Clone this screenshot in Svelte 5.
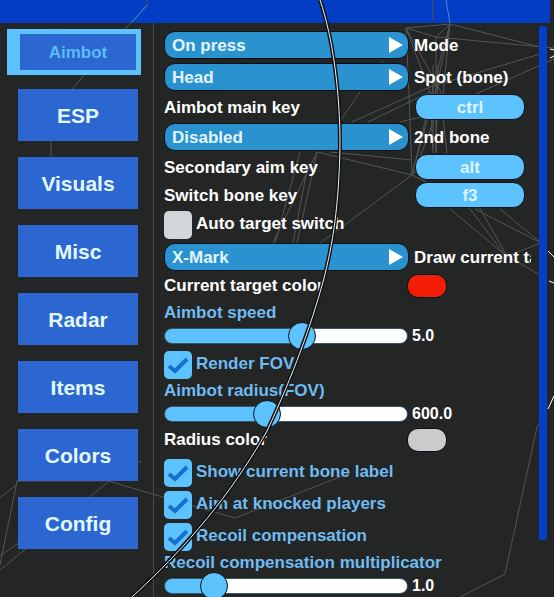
<script>
	/* Data */
	const tabs = ['Aimbot', 'ESP', 'Visuals', 'Misc', 'Radar', 'Items', 'Colors', 'Config']
	let active = 'Aimbot'

	let rows = [
		{ kind: 'select', id: 'mode', label: 'Mode', value: 'On press', options: ['On press', 'On hold'] },
		{ kind: 'select', id: 'spot', label: 'Spot (bone)', value: 'Head', options: ['Head', 'Neck', 'Chest'] },
		{ kind: 'key', id: 'main-key', label: 'Aimbot main key', value: 'ctrl' },
		{ kind: 'select', id: 'second', label: '2nd bone', value: 'Disabled', options: ['Disabled', 'Head', 'Chest'] },
		{ kind: 'key', id: 'second-key', label: 'Secondary aim key', value: 'alt' },
		{ kind: 'key', id: 'switch-key', label: 'Switch bone key', value: 'f3' },
		{ kind: 'check', id: 'auto-switch', label: 'Auto target switch', value: false },
		{ kind: 'select', id: 'draw', label: 'Draw current ta', value: 'X-Mark', options: ['X-Mark', 'Circle'] },
		{ kind: 'color', id: 'target-color', label: 'Current target color', value: '#f31c05' },
		{ kind: 'slider', id: 'speed', label: 'Aimbot speed', value: 5, max: 8.7 },
		{ kind: 'check', id: 'fov', label: 'Render FOV', value: true },
		{ kind: 'slider', id: 'radius', label: 'Aimbot radius(FOV)', value: 600, max: 1460 },
		{ kind: 'color', id: 'radius-color', label: 'Radius color', value: '#cbcbcb' },
		{ kind: 'check', id: 'bone-label', label: 'Show current bone label', value: true },
		{ kind: 'check', id: 'knocked', label: 'Aim at knocked players', value: true },
		{ kind: 'check', id: 'recoil', label: 'Recoil compensation', value: true },
		{ kind: 'slider', id: 'recoil-mult', label: 'Recoil compensation multiplicator', value: 1, max: 6.1 }
	]
</script>

<main>
	<header></header>

	<svg class="web" viewBox="0 0 554 597" preserveAspectRatio="xMinYMin slice" aria-hidden="true">
		<path d="M147 0V6L126 28L72 89M51 141V157M0 498L17 484M0 565L17 481H108L235 518L350 473M0 556L20 542M0 570L108 482M134 464L142 461" />
		<path d="M406 28L450 24L436 37ZM436 37L554 48M450 24L540 47M433 0V20M540 54L430 87L352 122M554 59L476 94M430 92L368 122" />
		<path d="M406 28L409 95L412 175M406 28L430 92L433 150M406 28L440 90L447 153M450 24L437 85L412 175M450 24L443 95L414 174M450 24L440 60L412 175M436 37V153M433 65V153M438 65L436 153M360 92L341 120M383 61L381 64" />
		<path d="M317 152L412 175L320 243M330 152L412 160M317 152L273 243M300 152L275 243M306 175L293 243M317 152L297 243M400 122L440 112M412 175L430 184" />
		<path d="M450 209L505 255M478 205L507 256M467 205L505 255M475 209L541 243M500 209L541 243L507 256L540 275M537 427L505 574L460 597M547 409L537 427" />
		<path class="bright" d="M550 49L554 50M550 58L554 56M548 251L554 257M549 281L554 283M548 409L554 396" />
		<path class="cyan" d="M147 5L132 22M446 0L450 23" />
	</svg>

	<div class="body">
		<nav>
			{#each tabs as tab}
				<button class="tab" class:active={tab === active} on:click={() => (active = tab)}>{tab}</button>
			{/each}
		</nav>

		<section>
			{#each rows as row}
				<div class="row {row.kind}">
					{#if row.kind === 'select'}
						<div class="picker">
							<select id={row.id} bind:value={row.value}>
								{#each row.options as option}
									<option value={option}>{option}</option>
								{/each}
							</select>
							<svg viewBox="0 0 16 18" aria-hidden="true"><path d="M1 1L15 9L1 17Z" fill="#fff" /></svg>
						</div>
						<label for={row.id}>{row.label}</label>
					{:else if row.kind === 'key'}
						<label for={row.id}>{row.label}</label>
						<button id={row.id} class="bind">{row.value}</button>
					{:else if row.kind === 'check'}
						<span class="box">
							<input id={row.id} type="checkbox" bind:checked={row.value} />
							{#if row.value}
								<svg viewBox="0 0 28 28" aria-hidden="true"><path d="M5 15L11 20L23 8" /></svg>
							{/if}
						</span>
						<label for={row.id} class:on={row.value}>{row.label}</label>
					{:else if row.kind === 'color'}
						<label for={row.id}>{row.label}</label>
						<input id={row.id} type="color" bind:value={row.value} />
					{:else}
						<label class="on" for={row.id}>{row.label}</label>
						<div class="track">
							<input
								id={row.id}
								type="range"
								min="0"
								max={row.max}
								step="0.1"
								bind:value={row.value}
								style="--fill: {(row.value / row.max) * 100}%"
							/>
							<output for={row.id}>{row.value.toFixed(1)}</output>
						</div>
					{/if}
				</div>
			{/each}
		</section>

		<div class="scroll"><div class="thumb"></div></div>
	</div>

	<svg class="fov" viewBox="0 0 554 597" preserveAspectRatio="xMinYMin slice" aria-hidden="true">
		<path class="shade" d="M320 0C333 38 340 92 340 145C339 205 333 244 323 282C311 325 294 373 267 431C240 478 203 532 132 597" />
		<path d="M320 0C333 38 340 92 340 145C339 205 333 244 323 282C311 325 294 373 267 431C240 478 203 532 132 597" />
	</svg>
</main>

<style>
	:global(body) {
		background-color: #242525;
	}

	main {
		position: relative;
		display: flex;
		flex-direction: column;
		min-height: 100vh;
		overflow: hidden;
		font: bold 17px/22px "Liberation Sans", Arial, sans-serif;
		color: #fff;
		background-color: #242525;
	}

	header {
		height: 23px;
		margin-right: 4px;
		background-color: #033dc3;
	}

	.web,
	.fov {
		position: absolute;
		inset: 0;
		width: 100%;
		height: 100%;
		fill: none;
		pointer-events: none;
	}

	.web {
		stroke: #555;
	}

	.web .bright {
		stroke: #fff;
	}

	.web .cyan {
		stroke: #3a8fdd;
	}

	.fov {
		stroke: #eef3f6;
	}

	.fov .shade {
		stroke: #101418;
		stroke-width: 4;
	}

	.body {
		position: relative;
		flex: 1;
		display: flex;
	}

	nav {
		flex: none;
		box-sizing: border-box;
		width: 154px;
		padding: 6px 12px 0 7px;
		display: flex;
		flex-direction: column;
		gap: 16px;
		border-right: 1px solid #4a4a4a;
	}

	button {
		font: inherit;
		padding: 2px 0 0;
		border: 0;
		cursor: pointer;
	}

	.tab {
		height: 52px;
		margin: 0 3px 0 11px;
		font-size: 21px;
		color: #e2f9ff;
		background-color: #2c66d1;
	}

	.tab.active {
		height: 46px;
		margin: 0 0 -2px;
		border: solid #5dc3ff;
		border-width: 5px 5px 5px 13px;
		font-size: 17px;
		color: #5dbcf7;
	}

	section {
		flex: 1;
		min-width: 0;
		margin-right: 8px;
		padding: 8px 0 0 10px;
		overflow: hidden;
	}

	.row {
		display: flex;
		align-items: center;
		margin-bottom: 4px;
		white-space: nowrap;
	}

	.on {
		color: #6fbcf2;
	}

	.picker {
		position: relative;
		flex: none;
		width: 245px;
		margin-right: 5px;
	}

	select {
		display: block;
		appearance: none;
		box-sizing: border-box;
		width: 100%;
		height: 28px;
		padding: 2px 28px 0 7px;
		border: 1px solid #07131c;
		border-radius: 11px;
		font: inherit;
		color: #e4f5ff;
		background-color: #2992cf;
	}

	.picker svg {
		position: absolute;
		top: 5px;
		right: 5px;
		width: 16px;
		height: 18px;
		pointer-events: none;
	}

	.select label,
	.key label {
		padding-top: 2px;
	}

	.key label,
	.color label {
		flex: none;
		width: 243px;
	}

	.bind {
		box-sizing: border-box;
		width: 110px;
		height: 26px;
		margin: -1px 0 -1px 8px;
		border: 1px solid #07131c;
		border-radius: 12px;
		color: #dcf4ff;
		background-color: #5dc3ff;
	}

	.box {
		position: relative;
		display: flex;
		margin-right: 4px;
	}

	.box input {
		appearance: none;
		width: 28px;
		height: 28px;
		margin: 0;
		border-radius: 5px;
		background-color: #d2d5da;
	}

	.box input:checked {
		background-color: #5dc3ff;
	}

	.check label {
		padding-bottom: 2px;
	}

	.box svg {
		position: absolute;
		inset: 0;
		fill: none;
		stroke: #176fd0;
		stroke-width: 4;
		pointer-events: none;
	}

	.color + .check {
		margin-top: 8px;
	}

	.color input {
		appearance: none;
		box-sizing: border-box;
		width: 40px;
		height: 24px;
		margin: -1px 0;
		padding: 0;
		border: 1px solid #07131c;
		border-radius: 11px;
		overflow: hidden;
		background: none;
	}

	.color input::-webkit-color-swatch-wrapper {
		padding: 0;
	}

	.color input::-webkit-color-swatch {
		border: 0;
	}

	.slider {
		flex-direction: column;
		align-items: flex-start;
	}

	.slider label {
		line-height: 24px;
	}

	.check + .slider {
		margin-top: -4px;
	}

	.slider:last-child {
		margin-bottom: 0;
	}

	.track {
		display: flex;
		align-items: center;
		gap: 4px;
		height: 22px;
	}

	output {
		font-size: 16px;
	}

	.track input {
		appearance: none;
		box-sizing: border-box;
		width: 244px;
		height: 16px;
		margin: 0;
		border: 1px solid #34556a;
		border-radius: 8px;
		background: linear-gradient(to right, #5dc3ff var(--fill), #fff var(--fill));
	}

	.track input::-webkit-slider-thumb {
		appearance: none;
		box-sizing: border-box;
		width: 28px;
		height: 28px;
		border: 1px solid #07131c;
		border-radius: 50%;
		background-color: #5dc3ff;
	}

	.scroll {
		flex: none;
		width: 8px;
		margin-right: 7px;
		padding-top: 3px;
	}

	.thumb {
		height: 90%;
		border-radius: 2px;
		background-color: #033fc8;
	}
</style>
